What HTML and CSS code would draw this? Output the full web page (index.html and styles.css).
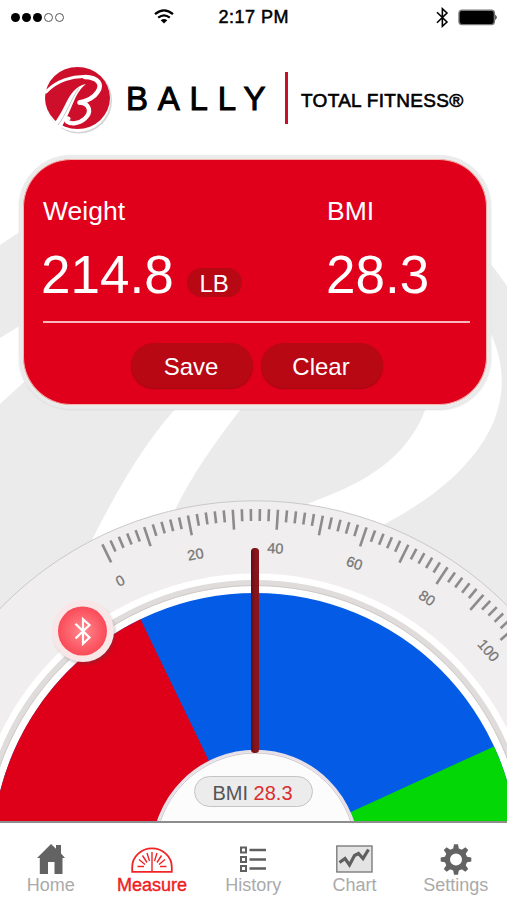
FILE: index.html
```html
<!DOCTYPE html>
<html lang="en">
<head>
  <meta charset="UTF-8">
  <meta name="viewport" content="width=device-width, initial-scale=1">
  <title>Bally Total Fitness</title>
  <link rel="stylesheet" href="styles.css">
</head>
<body>
  <div class="app">
    <svg class="watermark" viewBox="0 0 507 900">
      <path fill="#ebebeb" d="M0 245 Q130 155 260 158 Q430 170 507 286 V900 H0Z"/>
      <path fill="#fff" d="M0 338 L60 301 V350 Q25 381 0 404Z"/>
      <path fill="#fff" d="M184 400 Q140 443 91 542 L174 512 Q196 465 248 400Z"/>
      <path fill="#fff" d="M487 325 C507 365 504 394 494 421 C477 461 440 495 383 525 L307 504 C356 486 398 466 421 420 L431 395Z"/>
    </svg>

    <div class="status">
      <div class="signal"><i></i><i></i><i></i><i class="off"></i><i class="off"></i></div>
      <svg class="wifi" width="20" height="15" viewBox="0 0 20 15" fill="none" stroke="#000" stroke-width="2.2">
        <path d="M1 5.2 Q10 -2.4 19 5.2"/>
        <path d="M4.2 8.7 Q10 3.9 15.8 8.7"/>
        <path d="M10 14.5 L6.7 11.3 Q10 8.7 13.3 11.3Z" fill="#000" stroke="none"/>
      </svg>
      <div class="time">2:17 PM</div>
      <svg class="bt" width="13" height="21" viewBox="0 0 13 21" fill="none" stroke="#000" stroke-width="1.6">
        <path d="M1 5.2 L11 15 L6.4 19.3 V1.7 L11 6 L1 15.8"/>
      </svg>
      <svg class="battery" width="40" height="17" viewBox="0 0 40 17">
        <rect x="1" y="1.2" width="35.5" height="14.4" rx="3" fill="#000" stroke="#777" stroke-width="1.4"/>
        <path d="M37.5 5.6 Q40 8.4 37.5 11.2Z"/>
      </svg>
    </div>

    <div class="brand">
      <svg class="logo" width="72" height="70" viewBox="0 0 72 70">
        <circle cx="36" cy="34.5" r="33" fill="#d5d5d5"/>
        <circle cx="35" cy="33.5" r="32.5" fill="#fff"/>
        <ellipse cx="34.5" cy="32" rx="32.5" ry="31" fill="#cd0f2b"/>
        <g fill="none" stroke="#fff" stroke-linecap="round">
          <path stroke-width="3" d="M3 26 C14 14 30 10 43 10.5"/>
          <path stroke-width="4.6" d="M42 11 C55 11.5 60 18 54.5 26 C51 31.5 44 35 36.5 36.5"/>
          <path stroke-width="4.4" d="M37 36.5 C48 38 48 47 42 52.5 C36 58 28 58.5 24 55.5"/>
          <path stroke-width="3.2" d="M24 55.5 C22 53 24 51 26 52.5"/>
        </g>
        <path fill="#fff" d="M43 18 C32 20 27 29 22 39 C18 47 14 53 11 58 L18 62 C23 54 27 44 31 35 C35 26 38 22 43 18Z"/>
        <path fill="none" stroke="#aaa" stroke-width=".7" d="M36 22 C28 33 23 49 15 59"/>
      </svg>
      <div class="name">BALLY</div>
      <div class="rule"></div>
      <div class="sub">TOTAL FITNESS®</div>
    </div>

    <div class="card">
      <div class="readings">
        <div class="weight">
          <div class="label">Weight</div>
          <div class="value">214.8 <span class="unit">LB</span></div>
        </div>
        <div class="bmi">
          <div class="label">BMI</div>
          <div class="value">28.3</div>
        </div>
      </div>
      <div class="buttons">
        <button>Save</button>
        <button>Clear</button>
      </div>
    </div>

    <div class="gauge">
      <svg width="507" height="321" viewBox="0 500 507 321">
        <defs>
          <linearGradient id="needle">
            <stop offset="0" stop-color="#5c0e18"/>
            <stop offset=".5" stop-color="#86141c"/>
            <stop offset="1" stop-color="#8b151c"/>
          </linearGradient>
          <radialGradient id="knob">
            <stop offset="0" stop-color="#ff8a8e"/>
            <stop offset="1" stop-color="#fa4a58"/>
          </radialGradient>
          <filter id="soft" x="-30%" y="-30%" width="160%" height="160%">
            <feGaussianBlur stdDeviation="2"/>
          </filter>
        </defs>
        <circle cx="255" cy="856.5" r="355.7" fill="#f0eeee" stroke="#c9c9c9" stroke-width="1"/>
        <circle cx="255" cy="856" r="282.5" fill="#fff"/>
        <circle cx="255" cy="856" r="273" fill="none" stroke="#e0dcdc" stroke-width="6"/>
        <circle cx="255" cy="856" r="270.5" fill="none" stroke="#cfcbcb" stroke-width="1"/>
        <circle cx="255" cy="856" r="263" fill="#045be6"/>
        <path fill="#de0019" d="M255 856 L140.5 619.2 A263 263 0 0 0 -8 856Z"/>
        <path fill="#04d706" d="M255 856 L494 746.4 A263 263 0 0 1 518 856Z"/>
        <g id="ticks" stroke="#8c8c8c" stroke-width="2.6"></g>
        <g id="numbers" class="numbers"></g>
        <circle cx="255.5" cy="853.5" r="102.5" fill="#fcfcfc" stroke="#e7e0e7" stroke-width="2.5"/>
        <circle cx="255.5" cy="853.5" r="100.5" fill="none" stroke="#cfc5cd" stroke-width="1"/>
        <rect x="251" y="548" width="8" height="205" rx="3.5" fill="url(#needle)"/>
        <circle cx="85" cy="634" r="29" fill="#444" opacity=".55" filter="url(#soft)"/>
        <circle cx="83" cy="631" r="31" fill="#f9e6e7"/>
        <circle cx="82.5" cy="631" r="24.5" fill="url(#knob)"/>
        <path d="M75.5 623.8 L89.5 637.6 L83 643.8 V619.2 L89.5 625 L75.5 638.5" fill="none" stroke="#fff" stroke-width="2.2"/>
      </svg>
      <div class="pill">BMI <span>28.3</span></div>
    </div>

    <div class="tabs">
      <div class="tab">
        <svg width="28" height="32" viewBox="0 0 28 32" fill="#636363">
          <path d="M14 1 L19 5.8 V2 H24 V10.5 L28 15 H25.5 V31 H17.5 V19 H11 V31 H2.8 V15 H0Z"/>
        </svg>
        <span>Home</span>
      </div>
      <div class="tab active">
        <svg width="42" height="32" viewBox="0 0 42 32" fill="none" stroke="#ef2528" stroke-width="1.4">
          <path stroke-width="1.8" d="M1.2 28.8 V24 A19.8 18.6 0 0 1 40.8 24 V28.8Z"/>
          <path d="M21 9 V28 M16 10 L18.5 18 M11.5 12.5 L16 19.5 M8 16.5 L14 21.5 M6.5 23.5 H13 M26 10 L23.5 18 M30.5 12.5 L26 19.5 M34 16.5 L28 21.5 M35.5 23.5 H29"/>
        </svg>
        <span>Measure</span>
      </div>
      <div class="tab">
        <svg width="26" height="32" viewBox="0 0 26 32" fill="none" stroke="#5f5f5f" stroke-width="2">
          <path d="M1 4.5 H6 V9.5 H1Z M1 14 H6 V19 H1Z M1 23 H6 V28 H1Z"/>
          <path stroke-width="2.6" d="M9.5 7 H26 M9.5 16.5 H26 M9.5 25.5 H26"/>
        </svg>
        <span>History</span>
      </div>
      <div class="tab">
        <svg width="37" height="32" viewBox="0 0 37 32">
          <rect x=".8" y="3" width="35.2" height="26" fill="#e4e4e4" stroke="#7c7c7c" stroke-width="1.4"/>
          <path d="M3.5 19.5 L9 15.5 L13.5 22 L18.5 12.5 L22.5 10.5 L27 15.5 L32.5 6.5" fill="none" stroke="#606060" stroke-width="3.2"/>
        </svg>
        <span>Chart</span>
      </div>
      <div class="tab">
        <svg width="32" height="32" viewBox="0 0 32 32">
          <circle cx="16" cy="16.5" r="8.6" fill="none" stroke="#636363" stroke-width="5.2"/>
          <g id="teeth" fill="#636363"></g>
        </svg>
        <span>Settings</span>
      </div>
    </div>
  </div>

  <script>
    const ns = 'http://www.w3.org/2000/svg';
    const ticks = document.getElementById('ticks');
    const numbers = document.getElementById('numbers');
    const teeth = document.getElementById('teeth');

    // every 5th tick is a long one, every 10th gets a number
    for (let i = 0; i <= 52; i++) {
      const angle = -26.1 + i * 1.495;
      const major = i % 5 === 0;
      const line = document.createElementNS(ns, 'line');
      line.setAttribute('x1', 255);
      line.setAttribute('x2', 255);
      line.setAttribute('y1', 509);
      line.setAttribute('y2', major ? 529 : 521);
      line.setAttribute('transform', `rotate(${angle} 255 856)`);
      ticks.appendChild(line);

      if (i % 10 === 0) {
        const text = document.createElementNS(ns, 'text');
        text.setAttribute('x', 255);
        text.setAttribute('y', 554.5 - i * 0.09);
        text.setAttribute('transform', `rotate(${angle} 255 856)`);
        text.textContent = i * 2;
        numbers.appendChild(text);
      }
    }

    for (let i = 0; i < 8; i++) {
      const tooth = document.createElementNS(ns, 'path');
      tooth.setAttribute('d', 'M13 6.5 L14 1.2 H18 L19 6.5Z');
      tooth.setAttribute('transform', `rotate(${i * 45} 16 16.5)`);
      teeth.appendChild(tooth);
    }
  </script>
</body>
</html>
```

FILE: styles.css
```css
body {
  margin: 0;
  background-color: #fff;
  font-family: "Liberation Sans", Arial, sans-serif;
}
.app {
  position: relative;
  width: 507px;
  height: 900px;
  overflow: hidden;
  display: flex;
  flex-direction: column;
}
.app > div {
  position: relative;
  flex-shrink: 0;
}
.watermark {
  position: absolute;
  top: 0;
  left: 0;
  width: 507px;
  height: 900px;
}
.status {
  height: 34px;
  box-sizing: border-box;
  padding: 0 9px 0 11px;
  display: flex;
  align-items: center;
}
.signal {
  display: flex;
  gap: 2px;
  width: 144px;
}
.signal i {
  width: 9px;
  height: 9px;
  border-radius: 50%;
  background: #000;
}
.signal .off {
  box-sizing: border-box;
  background: #fff;
  border: 1px solid #555;
}
.wifi {
  flex-shrink: 0;
  margin-top: -2px;
}
.time {
  width: 76px;
  margin-left: 44px;
  font-size: 18px;
  letter-spacing: 0.5px;
  white-space: nowrap;
  -webkit-text-stroke: 0.5px #000;
}
.bt {
  margin-left: 142px;
}
.battery {
  margin-left: 9px;
}
.brand {
  height: 121px;
  box-sizing: border-box;
  padding: 32px 0 0 43px;
  display: flex;
  align-items: flex-start;
}
.name {
  width: 159px;
  margin: 14px 0 0 11px;
  font-size: 33px;
  line-height: 38px;
  letter-spacing: 9.8px;
  -webkit-text-stroke: 1px #000;
}
.rule {
  width: 3px;
  height: 52px;
  margin-top: 6px;
  background: #c91029;
}
.sub {
  margin: 24px 0 0 13px;
  font-size: 19px;
  line-height: 22px;
  letter-spacing: 0.3px;
  white-space: nowrap;
  -webkit-text-stroke: 0.6px #000;
}
.card {
  height: 254px;
  margin: 0 16px 0 19px;
  box-sizing: border-box;
  padding: 37px 17px 0 20px;
  background: #e0001c;
  background-clip: padding-box;
  border: 4px solid #ebebeb;
  border-radius: 52px;
  box-shadow: inset 0 0 0 1px #f4b5ac, 0 1px 2px #ddd;
  color: #fff;
}
.readings {
  height: 125px;
  display: flex;
  border-bottom: 2px solid #f8b8bd;
}
.weight {
  width: 284px;
}
.label {
  font-size: 26.5px;
  line-height: 30px;
}
.value {
  margin: 19px 0 0 -2px;
  font-size: 53px;
  line-height: 60px;
  display: flex;
  align-items: flex-start;
}
.bmi .value {
  margin-left: -1px;
}
.unit {
  width: 55px;
  height: 29px;
  margin: 23px 0 0 13px;
  border-radius: 15px;
  background: #b80814;
  font-size: 24px;
  line-height: 32px;
  text-align: center;
}
.buttons {
  display: flex;
  gap: 8px;
  margin: 20px 0 0 88px;
}
button {
  width: 122px;
  height: 45px;
  padding: 3px 2px 0 0;
  border: none;
  border-radius: 23px;
  background: #b80814;
  box-shadow: 0 1px 1px #a00612;
  color: #fff;
  font-family: inherit;
  font-size: 24px;
}
.gauge {
  height: 321px;
  margin-top: 91px;
}
.gauge svg {
  display: block;
}
.numbers {
  fill: #777;
  font-size: 14.5px;
  text-anchor: middle;
  stroke: #777;
  stroke-width: 0.3px;
}
.pill {
  position: absolute;
  left: 194px;
  top: 276px;
  width: 119px;
  height: 31px;
  box-sizing: border-box;
  border: 1.5px solid #c4c4c4;
  border-radius: 16px;
  background: #ececec;
  color: #555;
  font-size: 20px;
  line-height: 32px;
  text-align: center;
  text-indent: -2px;
}
.pill span {
  color: #da2f2c;
}
.tabs {
  height: 79px;
  box-sizing: border-box;
  padding-top: 20px;
  border-top: 2px solid #8d8d8d;
  background: #fff;
  display: flex;
}
.tab {
  width: 101.3px;
  display: flex;
  flex-direction: column;
  align-items: center;
  color: #aaa;
  font-size: 18px;
  line-height: 20px;
}
.tab.active {
  color: #ef1d22;
  -webkit-text-stroke: 0.4px #ef1d22;
}
```
